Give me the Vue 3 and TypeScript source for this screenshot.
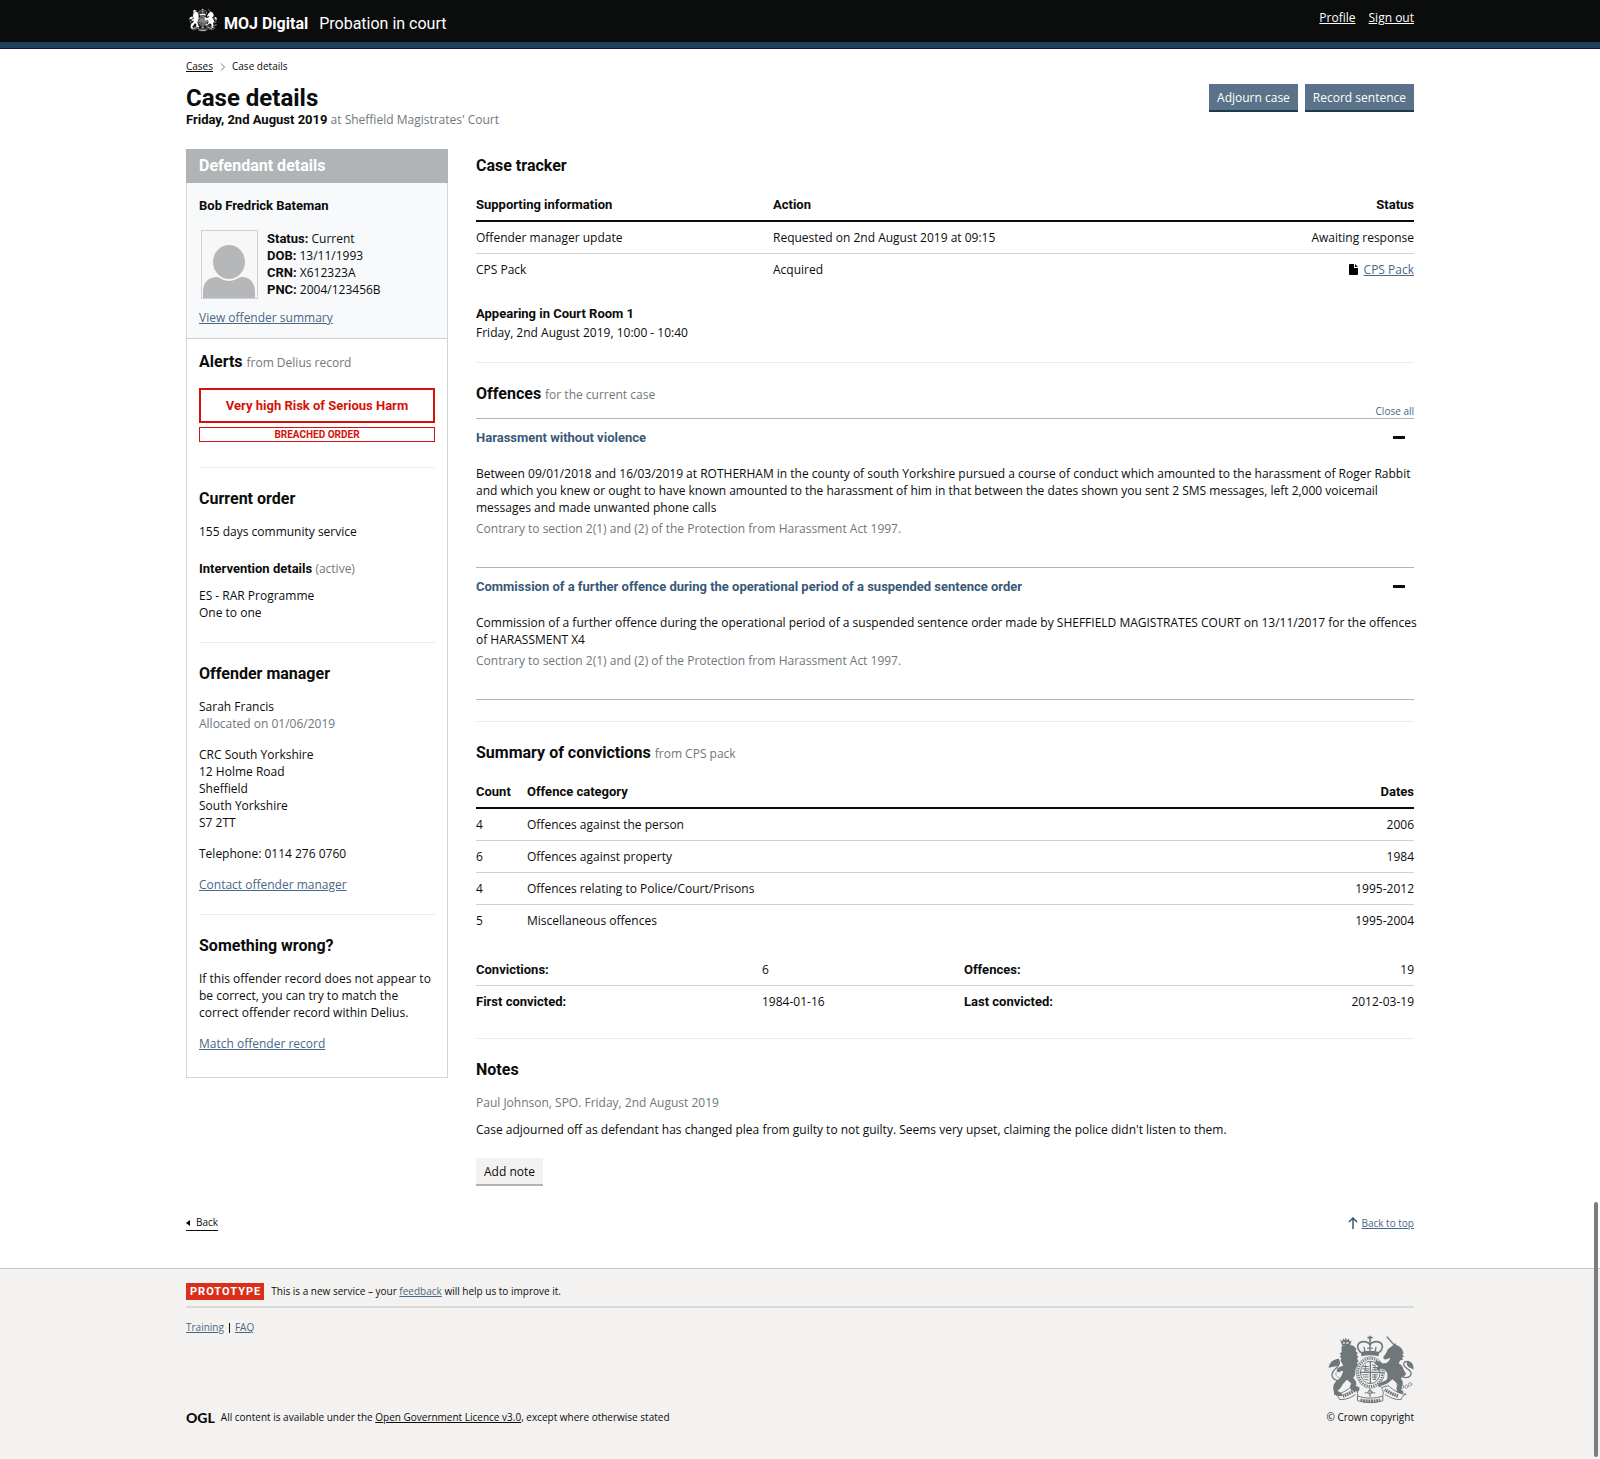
<script setup lang="ts">
import { computed, ref } from 'vue'

interface Offence {
  title: string
  detail: string
  statute: string
  open: boolean
}

const identifiers = [
  { label: 'Status:', value: 'Current' },
  { label: 'DOB:', value: '13/11/1993' },
  { label: 'CRN:', value: 'X612323A' },
  { label: 'PNC:', value: '2004/123456B' },
]

const offences = ref<Offence[]>([
  {
    title: 'Harassment without violence',
    detail:
      'Between 09/01/2018 and 16/03/2019 at ROTHERHAM in the county of south Yorkshire pursued a course of conduct which amounted to the harassment of Roger Rabbit and which you knew or ought to have known amounted to the harassment of him in that between the dates shown you sent 2 SMS messages, left 2,000 voicemail messages and made unwanted phone calls',
    statute: 'Contrary to section 2(1) and (2) of the Protection from Harassment Act 1997.',
    open: true,
  },
  {
    title: 'Commission of a further offence during the operational period of a suspended sentence order',
    detail:
      'Commission of a further offence during the operational period of a suspended sentence order made by SHEFFIELD MAGISTRATES COURT on 13/11/2017 for the offences of HARASSMENT X4',
    statute: 'Contrary to section 2(1) and (2) of the Protection from Harassment Act 1997.',
    open: true,
  },
])

const allOpen = computed(() => offences.value.every((o) => o.open))

function toggleAll() {
  const next = !allOpen.value
  offences.value.forEach((o) => (o.open = next))
}

const convictions = [
  { count: 4, category: 'Offences against the person', dates: '2006' },
  { count: 6, category: 'Offences against property', dates: '1984' },
  { count: 4, category: 'Offences relating to Police/Court/Prisons', dates: '1995-2012' },
  { count: 5, category: 'Miscellaneous offences', dates: '1995-2004' },
]
</script>

<template>
  <div id="top" class="page">
    <svg class="defs" aria-hidden="true">
      <symbol id="crest" viewBox="0 0 260 210">
        <g fill="none" stroke="currentColor" stroke-linecap="round" stroke-linejoin="round">
          <!-- crown -->
          <path d="M127 4v18M121 8h12" stroke-width="5" />
          <path d="M98 52C82 36 90 20 108 20c10 0 16 5 19 10 3-5 9-10 19-10 18 0 26 16 10 32" stroke-width="5" />
          <path d="M127 30v20M109 38l2 11M145 38l-2 11M120 40h14" stroke-width="4" />
          <!-- garter and shield -->
          <ellipse cx="128" cy="114" rx="43" ry="48" stroke-width="2" />
          <ellipse cx="128" cy="114" rx="37" ry="42" stroke-width="7" stroke-dasharray="4 3" stroke-linecap="butt" />
          <ellipse cx="128" cy="114" rx="30" ry="34" stroke-width="3" />
          <path d="M128 82v64M99 114h58" stroke-width="4" />
          <path d="M106 96h16M105 103h18M110 109h12M134 92h8M136 99h14M134 106h18M134 121h16M134 128h14M136 135h9M105 121h16M107 128h14M112 135l9 2M142 120v16M142 92v16M113 92v15" stroke-width="3" />
          <!-- tails -->
          <path d="M34 140C16 138 6 126 14 112c6-10 20-16 20-30" stroke-width="4" />
          <path d="M42 134C26 130 20 122 24 114" stroke-width="2" />
          <path d="M222 124c10 10 28 6 30-6 2-12-18-16-22-26-2-8 4-14 12-10" stroke-width="4" />
          <!-- horn and chain -->
          <path d="M179 6l22 25" stroke-width="4" />
          <circle cx="213" cy="150" r="5" stroke-width="2" />
          <circle cx="225" cy="158" r="5" stroke-width="2" />
          <circle cx="238" cy="157" r="5" stroke-width="2" />
          <circle cx="249" cy="150" r="5" stroke-width="2" />
          <!-- motto ribbon -->
          <path d="M20 180c16 2 38-12 54-26l20 6c-4 8-8 16-4 24M236 180c-16 2-38-12-54-26l-20 6c4 8 8 16 4 24" stroke-width="3" />
          <path d="M20 180c8 4 12 8 14 16 20 2 34-6 48-14M236 180c-8 4-12 8-14 16-20 2-34-6-48-14" stroke-width="3" />
          <path d="M44 186c12-4 28-12 40-20M212 186c-12-4-28-12-40-20" stroke-width="10" stroke-dasharray="5 2" stroke-linecap="butt" />
          <path d="M90 186c24 8 52 8 76 0v14c-24 8-52 8-76 0z" stroke-width="3" />
          <path d="M98 198c20 4 40 4 60 0" stroke-width="9" stroke-dasharray="6 2" stroke-linecap="butt" />
          <!-- thistle and rose -->
          <path d="M127 164v24M112 176h8M134 176h8" stroke-width="3" />
          <circle cx="127" cy="174" r="6" stroke-width="3" />
        </g>
        <g fill="currentColor">
          <path d="M99 52c18-5 38-5 56 0l-2 13c-16-4-36-4-52 0z" />
          <!-- lion crown -->
          <path fill-rule="evenodd" d="M36 14l7 5 3-9 4 6 3-8 4 8 5-5 3 9 6-3-5 16H42zM45 22h5v5h-5zM55 22h6v5h-6z" />
          <!-- lion -->
          <path d="M40 36C50 30 66 29 76 33c4 3 8 7 10 12l-4 3 8 7-4 4 6 9-5 3 5 9-4 4 2 8c-6 8-8 14-8 22 0 8-2 12-6 16l6 8c4 6 4 12 2 18l10 6c2 4 0 8-4 10-8 0-16-2-22-6l-2-10 4-8-12-12c-6 4-12 10-16 18-4 8-10 14-14 16l10 6c4 2 6 6 4 10H28l-10-6-3-18c0-12 8-22 18-28 6-6 10-16 12-24-4-2-8 0-12 4l-8-4 2-8 10-6 8-2-3-8-5-8 3-7-5-4 4-5-5-7 7-2z" />
          <path d="M1 100c2-16 12-26 32-28 4 10 0 18-6 22-8 2-16 2-26 6z" />
          <!-- unicorn -->
          <path d="M196 32l8-8 3 7c12 2 20 12 22 26l-4 2 6 7-6 2 2 8-8 1c-2 4-4 6-4 10 8 4 12 10 14 18l8 14c-4 6-10 10-16 12l6 12c0 8-2 16-6 22l8 8c0 4-2 6-6 6l-12-4-4-12 4-14-16-14-12 10c-8 4-14 8-20 8l-6 6-6-4 4-8 22-10c4-6 4-14 2-22l-8-10-10-4-8 8-7-6 7-8-12-8 4-8 12 2 8 6 12-2c6-4 10-10 12-16-6 2-14 8-20 4l-2-6c6-8 12-16 14-24z" />
          <path d="M259 106c2-14-4-26-18-28-4 8-2 16 4 20 6 2 10 4 14 8z" />
        </g>
      </symbol>
    </svg>

    <header class="banner">
      <div class="container banner-inner">
        <a class="brand" href="#top">
          <svg class="brand-crest" aria-hidden="true"><use href="#crest" /></svg>
          <span class="brand-org">MOJ Digital</span>
          <span class="brand-service">Probation in court</span>
        </a>
        <nav class="account" aria-label="Account">
          <a href="#profile">Profile</a>
          <a href="#sign-out">Sign out</a>
        </nav>
      </div>
    </header>

    <main class="container main">
      <nav class="breadcrumbs" aria-label="Breadcrumb">
        <a href="#cases">Cases</a>
        <svg class="chevron" viewBox="0 0 5 8" aria-hidden="true"><path d="M1 0.5L4.500 4L1 7.500" /></svg>
        <span>Case details</span>
      </nav>

      <div class="masthead">
        <div class="masthead-text">
          <h1>Case details</h1>
          <p><strong>Friday, 2nd August 2019</strong> <span class="muted">at Sheffield Magistrates' Court</span></p>
        </div>
        <div class="actions">
          <button type="button" class="btn btn-primary">Adjourn case</button>
          <button type="button" class="btn btn-primary">Record sentence</button>
        </div>
      </div>

      <div class="columns">
        <aside class="panel">
          <h2 class="panel-title">Defendant details</h2>

          <div class="identity">
            <p><strong>Bob Fredrick Bateman</strong></p>
            <div class="identity-body">
              <svg class="avatar" viewBox="0 0 57 69" role="img" aria-label="No photograph available">
                <rect x="0.500" y="0.500" width="56" height="68" fill="#f7f7f7" stroke="#cfd1d2" />
                <path d="M2 68V62C2 52 8 47 16 47C20 47 21 50 28 50C35 50 37 47 41 47C49 47 54 53 54 62V68Z" fill="#b5b7b9" />
                <ellipse cx="28" cy="32" rx="17" ry="19" fill="#f7f7f7" />
                <ellipse cx="28" cy="32" rx="16" ry="17" fill="#b5b7b9" />
              </svg>
              <ul class="plain">
                <li v-for="item in identifiers" :key="item.label">
                  <strong>{{ item.label }}</strong> {{ item.value }}
                </li>
              </ul>
            </div>
            <p><a href="#summary">View offender summary</a></p>
          </div>

          <section class="alerts">
            <h2>Alerts <small>from Delius record</small></h2>
            <p class="alert alert-major">Very high Risk of Serious Harm</p>
            <p class="alert alert-minor">BREACHED ORDER</p>
          </section>

          <section class="block">
            <h2>Current order</h2>
            <p>155 days community service</p>
            <h3>Intervention details <span class="muted">(active)</span></h3>
            <p>ES - RAR Programme<br />One to one</p>
          </section>

          <section class="block stack">
            <h2>Offender manager</h2>
            <p>Sarah Francis<br /><span class="muted">Allocated on 01/06/2019</span></p>
            <p>CRC South Yorkshire<br />12 Holme Road<br />Sheffield<br />South Yorkshire<br />S7 2TT</p>
            <p>Telephone: 0114 276 0760</p>
            <p><a href="#contact">Contact offender manager</a></p>
          </section>

          <section class="block stack">
            <h2>Something wrong?</h2>
            <p>If this offender record does not appear to be correct, you can try to match the correct offender record within Delius.</p>
            <p><a href="#match">Match offender record</a></p>
          </section>
        </aside>

        <div class="content">
          <section class="tracker">
            <h2>Case tracker</h2>
            <table>
              <colgroup>
                <col class="col-info" />
                <col />
                <col class="col-status" />
              </colgroup>
              <thead>
                <tr>
                  <th scope="col">Supporting information</th>
                  <th scope="col">Action</th>
                  <th scope="col" class="end">Status</th>
                </tr>
              </thead>
              <tbody>
                <tr>
                  <td>Offender manager update</td>
                  <td>Requested on 2nd August 2019 at 09:15</td>
                  <td class="end">Awaiting response</td>
                </tr>
                <tr>
                  <td>CPS Pack</td>
                  <td>Acquired</td>
                  <td class="end">
                    <svg class="file" viewBox="0 0 9 11" aria-hidden="true">
                      <path d="M1 0H5V4H9V10Q9 11 8 11H1Q0 11 0 10V1Q0 0 1 0ZM6 0L9 3H6Z" />
                    </svg>
                    <a href="#cps-pack">CPS Pack</a>
                  </td>
                </tr>
              </tbody>
            </table>
            <div class="appearing">
              <p><strong>Appearing in Court Room 1</strong></p>
              <p>Friday, 2nd August 2019, 10:00 - 10:40</p>
            </div>
          </section>

          <section class="block">
            <h2 class="flush">Offences <small>for the current case</small></h2>
            <div class="accordion-controls">
              <button type="button" @click="toggleAll">{{ allOpen ? 'Close all' : 'Open all' }}</button>
            </div>
            <div class="accordion">
              <div v-for="offence in offences" :key="offence.title" class="accordion-item">
                <h3>
                  <button type="button" :aria-expanded="offence.open" @click="offence.open = !offence.open">
                    <span>{{ offence.title }}</span>
                    <span class="toggle" :class="{ closed: !offence.open }"></span>
                  </button>
                </h3>
                <div v-if="offence.open" class="accordion-body">
                  <p>{{ offence.detail }}</p>
                  <p class="muted">{{ offence.statute }}</p>
                </div>
              </div>
            </div>
          </section>

          <section class="block">
            <h2>Summary of convictions <small>from CPS pack</small></h2>
            <table>
              <colgroup>
                <col class="col-count" />
                <col />
                <col class="col-status" />
              </colgroup>
              <thead>
                <tr>
                  <th scope="col">Count</th>
                  <th scope="col">Offence category</th>
                  <th scope="col" class="end">Dates</th>
                </tr>
              </thead>
              <tbody>
                <tr v-for="row in convictions" :key="row.category">
                  <td>{{ row.count }}</td>
                  <td>{{ row.category }}</td>
                  <td class="end">{{ row.dates }}</td>
                </tr>
              </tbody>
            </table>
            <table class="totals">
              <colgroup>
                <col class="col-label" />
                <col class="col-value" />
                <col />
                <col class="col-status" />
              </colgroup>
              <tbody>
                <tr>
                  <th scope="row">Convictions:</th>
                  <td>6</td>
                  <th scope="row">Offences:</th>
                  <td class="end">19</td>
                </tr>
                <tr>
                  <th scope="row">First convicted:</th>
                  <td>1984-01-16</td>
                  <th scope="row">Last convicted:</th>
                  <td class="end">2012-03-19</td>
                </tr>
              </tbody>
            </table>
          </section>

          <section class="block notes">
            <h2>Notes</h2>
            <p class="muted">Paul Johnson, SPO. Friday, 2nd August 2019</p>
            <p>Case adjourned off as defendant has changed plea from guilty to not guilty. Seems very upset, claiming the police didn't listen to them.</p>
            <button type="button" class="btn btn-secondary">Add note</button>
          </section>
        </div>
      </div>

      <div class="page-links">
        <a class="back" href="#back">
          <svg viewBox="0 0 4 6" aria-hidden="true"><path d="M4 0V6L0 3Z" /></svg>Back
        </a>
        <div class="to-top">
          <svg viewBox="0 0 10 12" aria-hidden="true"><path d="M5 12V1M1 5L5 1L9 5" /></svg>
          <a href="#top">Back to top</a>
        </div>
      </div>
    </main>

    <footer class="footer">
      <div class="container">
        <div class="phase">
          <strong class="tag">PROTOTYPE</strong>
          <span>This is a new service – your <a href="#feedback">feedback</a> will help us to improve it.</span>
        </div>
        <nav class="footer-links" aria-label="Support">
          <a href="#training">Training</a>
          <span class="divider"></span>
          <a href="#faq">FAQ</a>
        </nav>
        <div class="footer-base">
          <p class="licence">
            <span class="ogl">OGL</span>
            <span>All content is available under the <a href="#licence">Open Government Licence v3.0</a>, except where otherwise stated</span>
          </p>
          <div class="copyright">
            <svg class="footer-crest" aria-hidden="true"><use href="#crest" /></svg>
            <a href="#copyright">© Crown copyright</a>
          </div>
        </div>
      </div>
    </footer>

    <div class="scroll-thumb" aria-hidden="true"></div>
  </div>
</template>

<style>
body {
  background: #f3f2f1;
}
</style>

<style scoped>
.page {
  position: relative;
  display: flex;
  flex-direction: column;
  min-height: 100vh;
  background: #fff;
  color: #0b0c0c;
  font: 400 12px/17px 'Open Sans', 'Noto Sans', sans-serif;
}

.defs {
  display: none;
}

h1,
h2,
h3,
p,
ul {
  margin: 0;
}

h1,
h2,
h3,
strong,
th {
  font-family: Roboto, 'Liberation Sans', sans-serif;
  font-weight: 700;
}

strong,
th,
h3 {
  font-size: 13px;
  line-height: 17px;
}

h1 {
  font-size: 24px;
  line-height: 26px;
}

h2 {
  margin-bottom: 14px;
  font-size: 16px;
  line-height: 20px;
}

h2 small,
h3 .muted {
  font: 400 12px/17px 'Open Sans', 'Noto Sans', sans-serif;
}

h2 small,
.muted {
  color: #6f777b;
}

a {
  color: #4a6785;
}

button {
  margin: 0;
  padding: 0;
  border: 0;
  background: none;
  color: inherit;
  font: inherit;
  cursor: pointer;
}

.container {
  box-sizing: border-box;
  width: 100%;
  max-width: 1268px;
  margin: 0 auto;
  padding: 0 20px;
}

/* Header */
.banner {
  border-bottom: 1px solid #0a1650;
  background: linear-gradient(#0b0c0c, #0b0c0c) top / 100% 42px no-repeat #20405f;
}

.banner-inner {
  display: flex;
  justify-content: space-between;
  height: 48px;
}

.brand {
  display: flex;
  align-items: center;
  height: 48px;
  color: #fff;
  font: 400 16px/20px Roboto, 'Liberation Sans', sans-serif;
  text-decoration: none;
}

.brand-crest {
  width: 28px;
  height: 24px;
  margin: 0 7px 8px 3px;
}

.brand-org {
  margin-right: 11px;
  font-weight: 700;
}

.account {
  display: flex;
  gap: 13px;
  padding-top: 9px;
}

.account a {
  color: #fff;
}

/* Page heading */
.breadcrumbs {
  display: flex;
  align-items: center;
  gap: 7px;
  margin: 10px 0;
  font-size: 10px;
  line-height: 15px;
}

.breadcrumbs a {
  color: #0b0c0c;
}

.chevron {
  width: 5px;
  height: 8px;
  fill: none;
  stroke: #6f777b;
}

.masthead {
  display: flex;
  justify-content: space-between;
  align-items: flex-start;
  margin-bottom: 21px;
}

.masthead-text {
  padding-top: 1px;
}

.actions {
  display: flex;
  gap: 7px;
}

.btn {
  padding: 5px 8px 4px;
  line-height: 17px;
}

.btn-primary {
  border-bottom: 2px solid #1c3a48;
  background: #5a728a;
  color: #fff;
}

.btn-secondary {
  border-bottom: 2px solid #b1b4b6;
  background: #f3f2f1;
}

/* Columns */
.columns {
  display: grid;
  grid-template-columns: 262px minmax(0, 1fr);
  align-items: start;
  gap: 28px;
}

.panel {
  border: 1px solid #d3d6d8;
  border-top: 0;
}

.panel-title {
  margin: 0 -1px;
  padding: 7px 13px;
  background: #b1b4b6;
  color: #fff;
}

.identity {
  padding: 14px 12px 12px;
  border-bottom: 1px solid #ccd0d3;
  background: #f8f9fb;
}

.identity-body {
  display: flex;
  gap: 9px;
  margin: 16px 0 10px 2px;
}

.avatar {
  width: 57px;
  height: 69px;
}

.plain {
  padding: 0;
  list-style: none;
}

.alerts {
  padding: 13px 12px 25px;
}

.alerts h2 {
  margin-bottom: 16px;
}

.alert {
  border: 1px solid #d4120a;
  color: #d4120a;
  font-family: Roboto, 'Liberation Sans', sans-serif;
  font-weight: 700;
  text-align: center;
}

.alert-major {
  padding: 7px;
  border-width: 2px;
  font-size: 13px;
}

.alert-minor {
  margin-top: 4px;
  font-size: 10px;
  line-height: 13px;
}

.block {
  padding: 21px 0;
  border-top: 1px solid #ebecec;
}

.panel .block {
  margin: 0 12px;
}

.panel .block:last-child {
  padding-bottom: 25px;
}

.block > p + h3 {
  margin: 20px 0 10px;
}

.stack p + p {
  margin-top: 14px;
}

/* Tables */
.tracker {
  padding: 7px 0 21px;
}

table {
  width: 100%;
  border-collapse: separate;
  border-spacing: 0;
  table-layout: fixed;
}

th,
td {
  padding: 7px 0;
  border-bottom: 1px solid #cfd1d3;
  text-align: left;
}

thead th {
  padding-top: 6px;
  border-bottom: 2px solid #0b0c0c;
}

tr:last-child td,
tbody tr:last-child th {
  border-bottom: 0;
}

.end {
  text-align: right;
}

.col-info {
  width: 297px;
}

.col-status {
  width: 150px;
}

.col-count {
  width: 51px;
}

.col-label {
  width: 286px;
}

.col-value {
  width: 202px;
}

.totals {
  margin-top: 18px;
}

.file {
  width: 9px;
  height: 11px;
  margin-right: 6px;
  vertical-align: -1px;
}

.appearing {
  display: grid;
  gap: 2px;
  margin-top: 20px;
}

/* Accordion */
.flush {
  margin-bottom: 0;
}

.accordion-controls {
  display: flex;
  justify-content: flex-end;
}

.accordion-controls button {
  color: #4a6785;
  font-size: 10px;
  line-height: 14px;
}

.accordion {
  border-bottom: 1px solid #b1b4b6;
}

.accordion-item {
  border-top: 1px solid #b1b4b6;
}

.accordion-item button {
  display: flex;
  justify-content: space-between;
  align-items: center;
  width: 100%;
  padding: 10px 9px 10px 0;
  color: #375978;
  text-align: left;
}

.toggle {
  position: relative;
  width: 12px;
  height: 3px;
  background: #0b0c0c;
}

.toggle.closed::after {
  content: '';
  position: absolute;
  top: -4px;
  left: 5px;
  width: 3px;
  height: 11px;
  background: #0b0c0c;
}

.accordion-body {
  display: grid;
  gap: 4px;
  margin-right: -8px;
  padding: 9px 0 30px;
}

/* Notes */
.notes {
  padding-bottom: 0;
}

.notes p + p {
  margin: 10px 0 20px;
}

.page-links {
  display: flex;
  justify-content: space-between;
  align-items: center;
  margin: 29px 0 37px;
  font-size: 10px;
  line-height: 15px;
}

.back {
  display: flex;
  align-items: center;
  gap: 6px;
  border-bottom: 1px solid #0b0c0c;
  color: #0b0c0c;
  text-decoration: none;
}

.back svg {
  width: 4px;
  height: 6px;
}

.to-top {
  display: flex;
  align-items: center;
  gap: 3px;
}

.to-top svg {
  width: 10px;
  height: 12px;
  fill: none;
  stroke: #375978;
  stroke-width: 1.500;
}

/* Footer */
.footer {
  flex: 1;
  padding: 14px 0 33px;
  border-top: 1px solid #c4c6c8;
  background: #f3f2f1;
  font-size: 10px;
  line-height: 15px;
}

.phase {
  display: flex;
  align-items: center;
  gap: 7px;
  padding-bottom: 6px;
  border-bottom: 2px solid #d8d9d9;
}

.tag {
  padding: 0 3px 0 4px;
  background: #d8301a;
  color: #fff;
  font-size: 11px;
  letter-spacing: 1px;
}

.footer-links {
  display: flex;
  align-items: center;
  gap: 5px;
  margin-top: 12px;
}

.divider {
  width: 1px;
  height: 10px;
  background: #0b0c0c;
}

.footer-base {
  display: flex;
  justify-content: space-between;
  align-items: flex-end;
}

.licence {
  display: flex;
  align-items: center;
  gap: 6px;
}

.licence a {
  color: #0b0c0c;
}

.ogl {
  font: 900 14px/15px Lato, Roboto, sans-serif;
}

.copyright {
  display: grid;
  justify-items: end;
  gap: 6px;
}

.copyright a {
  color: #0b0c0c;
  text-decoration: none;
}

.footer-crest {
  width: 86px;
  height: 69px;
  color: #6f777b;
}

/* Overlay scroll indicator */
.scroll-thumb {
  position: absolute;
  right: 2px;
  bottom: 2px;
  width: 4px;
  height: 255px;
  border-radius: 2px;
  background: #7b7c7c;
}
</style>
